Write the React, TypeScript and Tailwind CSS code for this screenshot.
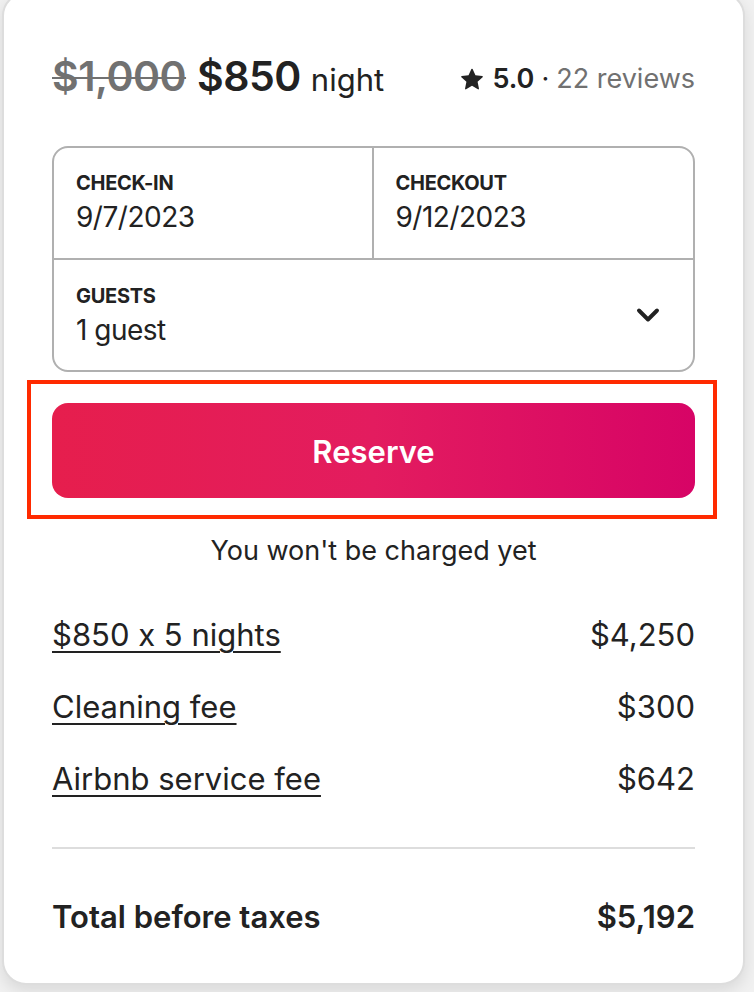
import { ChevronDown } from "lucide-react";

interface FeeRow {
  label: string;
  amount: string;
}

const fees: FeeRow[] = [
  { label: "$850 x 5 nights", amount: "$4,250" },
  { label: "Cleaning fee", amount: "$300" },
  { label: "Airbnb service fee", amount: "$642" },
];

function Star() {
  return (
    <svg viewBox="0 0 32 32" className="h-[22px] w-[22px] fill-[#222222]" aria-hidden>
      <path d="M15.1 1.58l-4.13 8.88-9.86 1.27a1 1 0 0 0-.54 1.74l7.3 6.57-1.97 9.85a1 1 0 0 0 1.480 1.06l8.62-5 8.63 5a1 1 0 0 0 1.48-1.06l-1.97-9.85 7.3-6.57a1 1 0 0 0-.55-1.73l-9.86-1.28-4.12-8.88a1 1 0 0 0-1.82 0z" />
    </svg>
  );
}

export default function App() {
  return (
    <div className="min-h-[992px] w-[754px] overflow-hidden bg-[#f1f1f1] pl-[2px] font-['Inter',sans-serif] text-[#222222] [font-feature-settings:'calt'_0]">
      <section className="-mt-[8px] w-[743px] rounded-[24px] border-2 border-[#dddddd] bg-white px-[48px] pb-[46px] pt-[54px] shadow-[0_6px_16px_rgba(0,0,0,0.10)]">
        <header className="flex h-[56px] items-center justify-between">
          <div className="flex items-baseline">
            <span className="text-[41px] font-semibold leading-none tracking-[-0.5px] text-[#717171] line-through decoration-2">$1,000</span>
            <span className="ml-[11px] text-[41px] font-semibold leading-none tracking-[-0.5px]">$850</span>
            <span className="ml-[10px] text-[31px] leading-none">night</span>
          </div>
          <div className="flex items-center pt-[5px] text-[27px] leading-none">
            <Star />
            <span className="ml-[9px] font-semibold">5.0</span>
            <span className="mx-[7px] text-[#222222]">·</span>
            <span className="text-[#717171]">22 reviews</span>
          </div>
        </header>

        <div className="mt-[42px] overflow-hidden rounded-[16px] border-2 border-[#b0b0b0]">
          <div className="grid h-[110px] grid-cols-2">
            <div className="border-r-2 border-[#b0b0b0] pl-[22px] pt-[23px]">
              <p className="text-[20px] font-bold leading-[24px] tracking-[-0.3px]">CHECK-IN</p>
              <p className="mt-[5px] text-[28px] leading-[34px] tracking-[-0.5px]">9/7/2023</p>
            </div>
            <div className="pl-[22px] pt-[23px]">
              <p className="text-[20px] font-bold leading-[24px] tracking-[-0.3px]">CHECKOUT</p>
              <p className="mt-[5px] text-[28px] leading-[34px] tracking-[-0.5px]">9/12/2023</p>
            </div>
          </div>
          <div className="flex h-[112px] items-center justify-between border-t-2 border-[#b0b0b0] pl-[22px] pr-[27px]">
            <div>
              <p className="text-[20px] font-bold leading-[24px] tracking-[-0.3px]">GUESTS</p>
              <p className="mt-[5px] text-[28px] leading-[34px] tracking-[-0.5px]">1 guest</p>
            </div>
            <ChevronDown className="h-[36px] w-[36px]" strokeWidth={2.6} />
          </div>
        </div>

        <div className="relative mt-[31px]">
          <button className="flex h-[95px] w-full items-center justify-center rounded-[16px] bg-[linear-gradient(to_right,#E61E4D_0%,#E31C5F_50%,#D70466_100%)] pt-[3px] text-[31px] font-semibold text-white">
            Reserve
          </button>
          <div className="pointer-events-none absolute -bottom-[21px] -left-[25px] -right-[22px] -top-[23px] border-4 border-[#ff2a00]" />
        </div>

        <p className="mt-[36px] text-center text-[27px] leading-[34px]">You won't be charged yet</p>

        <div className="mt-[47px] flex flex-col gap-[32px]">
          {fees.map((fee) => (
            <div key={fee.label} className="flex items-center justify-between text-[31px] leading-[40px]">
              <span className="underline decoration-2 underline-offset-[5px]">{fee.label}</span>
              <span>{fee.amount}</span>
            </div>
          ))}
        </div>

        <div className="mt-[48px] h-[2px] bg-[#dddddd]" />

        <div className="mt-[48px] flex items-center justify-between text-[31px] font-semibold leading-[40px]">
          <span>Total before taxes</span>
          <span>$5,192</span>
        </div>
      </section>
    </div>
  );
}
